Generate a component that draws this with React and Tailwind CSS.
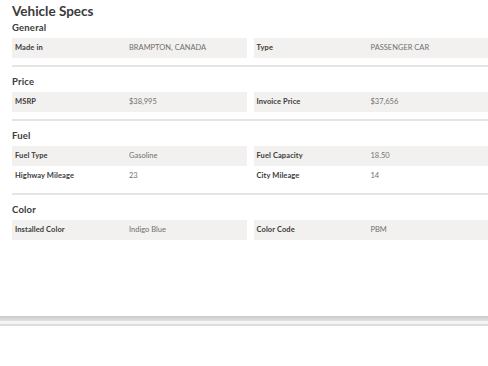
import React from 'react';

const sections = [
  {
    title: 'General',
    rows: [[['Made in', 'BRAMPTON, CANADA'], ['Type', 'PASSENGER CAR']]],
  },
  {
    title: 'Price',
    rows: [[['MSRP', '$38,995'], ['Invoice Price', '$37,656']]],
  },
  {
    title: 'Fuel',
    rows: [
      [['Fuel Type', 'Gasoline'], ['Fuel Capacity', '18.50']],
      [['Highway Mileage', '23'], ['City Mileage', '14']],
    ],
  },
  {
    title: 'Color',
    rows: [[['Installed Color', 'Indigo Blue'], ['Color Code', 'PBM']]],
  },
];

const Cell = ({ label, value, shaded }) => (
  <div className={`flex items-center h-5 pl-[3px] ${shaded ? 'bg-[#f2f1ef]' : ''}`}>
    <span className="w-[114px] shrink-0 text-[7.5px] font-bold text-[#3b3b3b] tracking-[0.1px]">{label}</span>
    <span className="text-[7.5px] text-[#707070]">{value}</span>
  </div>
);

const Section = ({ title, rows, first, last }) => (
  <section>
    <h3 className={`text-[9.5px] leading-[12px] font-bold text-[#3b3b3b] tracking-[0.2px] mb-1 ${first ? 'mt-[2px]' : 'pt-[9px]'}`}>
      {title}
    </h3>
    <div className="flex flex-col">
      {rows.map((row, i) => (
        <div key={i} className="grid grid-cols-2 gap-x-[7px]">
          {row.map(([label, value]) => (
            <Cell key={label} label={label} value={value} shaded={i % 2 === 0} />
          ))}
        </div>
      ))}
    </div>
    {!last && <div className="mt-[7px] h-[2px] bg-[#e6e5e3]" />}
  </section>
);

export default function App() {
  return (
    <div className="w-[488px] h-[366px] bg-white overflow-hidden" style={{ fontFamily: 'Lato, "Open Sans", sans-serif' }}>
      <div className="h-[314px] pl-3">
        <h2 className="mt-[2px] text-[13.5px] leading-[18px] font-bold text-[#3a3a3a]">Vehicle Specs</h2>
        {sections.map((s, i) => (
          <Section key={s.title} {...s} first={i === 0} last={i === sections.length - 1} />
        ))}
      </div>
      {/* footer rule */}
      <div className="h-[5px] bg-gradient-to-b from-[#c9c9c9] to-[#e2e2e2]" />
      <div className="h-[3px] bg-[#f4f4f4]" />
      <div className="h-[2px] bg-[#dcdcdc]" />
    </div>
  );
}
